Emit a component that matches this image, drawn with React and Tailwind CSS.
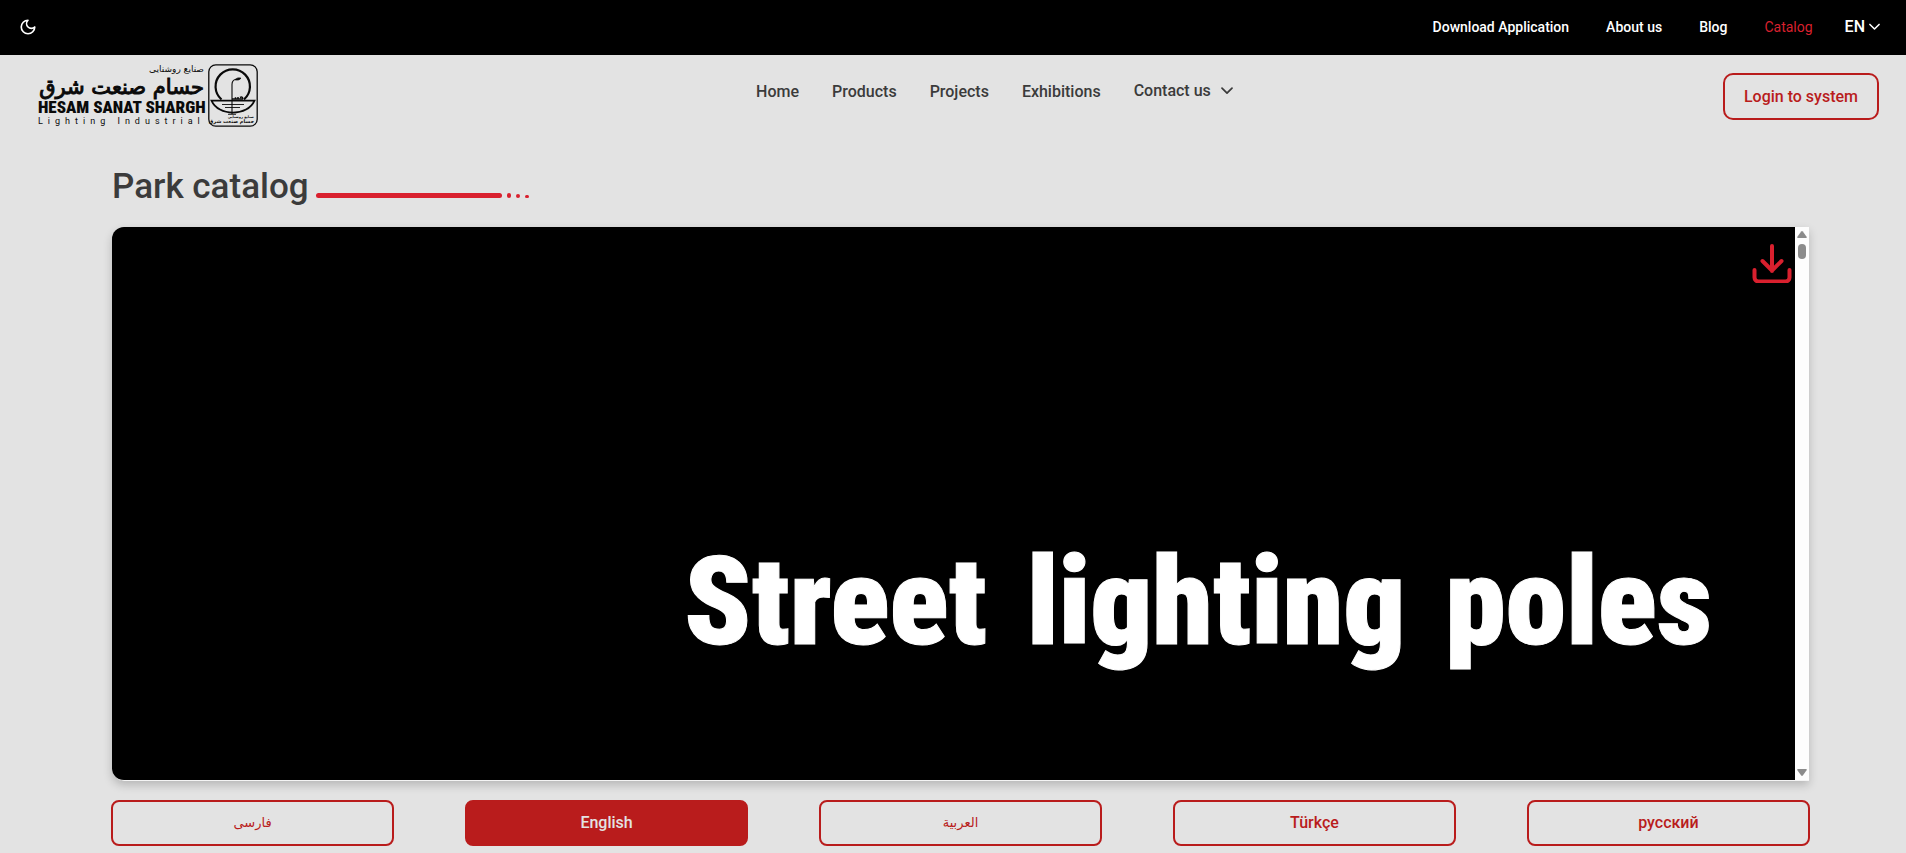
import React from "react";

const topLinks = ["Download Application", "About us", "Blog"];
const navLinks = ["Home", "Products", "Projects", "Exhibitions"];
const languages = [
  { label: "فارسی", code: "fa", dir: "rtl" },
  { label: "English", code: "en", dir: "ltr", active: true },
  { label: "العربية", code: "ar", dir: "rtl" },
  { label: "Türkçe", code: "tr", dir: "ltr" },
  { label: "русский", code: "ru", dir: "ltr" },
];

function Chevron({ className }) {
  return (
    <svg viewBox="0 0 12 8" className={className} fill="none" stroke="currentColor" strokeWidth="1.7" strokeLinecap="round" strokeLinejoin="round" aria-hidden="true">
      <path d="M1 1.2l5 5 5-5" />
    </svg>
  );
}

function Emblem() {
  return (
    <svg viewBox="0 0 50 63" className="h-[63px] w-[50px] shrink-0" fill="none" stroke="#0a0a0a" aria-hidden="true">
      <rect x="0.8" y="0.8" width="48.4" height="61.4" rx="7" strokeWidth="1.3" />
      <path d="M13.5 35.5A17.2 17.2 0 1 1 36 35.5" strokeWidth="2.2" />
      <path d="M3.5 36.6H46.5C43 44.5 34.5 48.6 25 48.6S7 44.5 3.500 36.6Z" strokeWidth="1.8" />
      <path d="M24 50V20.500C24 17.500 25.500 15.800 28 15.300" strokeWidth="1.1" />
      <path d="M27 15.800C28.500 13.900 31 13.500 33 14.200C31.500 16 29.500 16.300 27 15.800Z" fill="#0a0a0a" strokeWidth="0.8" />
      <path d="M24 35H34.500C35.200 33.500 34 32.300 32 33.500M30 34.500V33M27.500 34.500V33.200" strokeWidth="1.5" />
      <path d="M14 40.500H36M17 43.500H32M20 50.300H28" strokeWidth="0.9" />
      <g stroke="none" fill="#0a0a0a" className="font-['DejaVu_Sans',sans-serif] font-bold">
        <text x="46" y="53.500" fontSize="3.500" direction="rtl">صنایع روشنایی</text>
        <text x="46" y="59" fontSize="5" direction="rtl">حسام صنعت شرق</text>
      </g>
    </svg>
  );
}

function Logo() {
  return (
    <a href="#" aria-label="Hesam Sanat Shargh" className="flex items-center gap-1 text-[#0a0a0a]">
      <span className="flex w-[166px] flex-col whitespace-nowrap">
        <span dir="rtl" className="font-['DejaVu_Sans',sans-serif] text-[9px] leading-3">صنایع روشنایی</span>
        <span dir="rtl" className="font-['DejaVu_Sans',sans-serif] text-[21px] leading-[24px] [-webkit-text-stroke:1px_#0a0a0a]">حسام صنعت شرق</span>
        <span className="font-['Roboto_Condensed',sans-serif] text-[17px] font-black leading-4">HESAM SANAT SHARGH</span>
        <span className="text-[9px] leading-3 tracking-[5px]">Lighting Industrial</span>
      </span>
      <Emblem />
    </a>
  );
}

function TopBar() {
  return (
    <div className="flex h-[55px] items-center justify-between bg-black pb-[2px] pl-[19px] pr-[26px] text-white">
      <button type="button" aria-label="Dark mode">
        <svg viewBox="0 0 24 24" className="size-[18px]" fill="none" stroke="currentColor" strokeWidth="2.2" strokeLinecap="round" strokeLinejoin="round" aria-hidden="true">
          <path d="M12 3a6 6 0 0 0 9 9 9 9 0 1 1-9-9Z" />
        </svg>
      </button>
      <div className="flex items-center gap-8">
        <nav className="flex items-center gap-[37px] text-sm font-medium">
          {topLinks.map((label) => (
            <a key={label} href="#">{label}</a>
          ))}
          <a href="#" className="font-normal text-[#d9202e]">Catalog</a>
        </nav>
        <button type="button" className="flex items-center gap-1 font-medium">
          EN
          <Chevron className="h-2 w-[11px]" />
        </button>
      </div>
    </div>
  );
}

function Header() {
  return (
    <header className="flex items-start justify-between pl-[38px] pr-[27px] pt-2">
      <Logo />
      <nav className="flex items-center gap-[33px] pl-2 pt-4 font-medium">
        {navLinks.map((label) => (
          <a key={label} href="#">{label}</a>
        ))}
        <button type="button" className="flex items-center gap-[10px] pb-[2px]">
          Contact us
          <Chevron className="h-2 w-3" />
        </button>
      </nav>
      <a href="#" className="mt-[10px] rounded-[10px] border-2 border-[#b91c1c] px-[19px] py-[10px] font-medium leading-[23px] text-[#b91c1c]">
        Login to system
      </a>
    </header>
  );
}

function TitleRule() {
  return (
    <span className="flex items-end gap-[5px] pb-[13px]" aria-hidden="true">
      <span className="h-[5px] w-[186px] rounded-full bg-[#d9202e]" />
      <span className="h-[5px] w-1 rounded-full bg-[#d9202e]" />
      <span className="size-1 rounded-full bg-[#d9202e]" />
      <span className="h-[3px] w-1 rounded-full bg-[#d9202e]" />
    </span>
  );
}

function Viewer() {
  return (
    <section className="relative flex h-[554px] overflow-hidden rounded-l-xl border-b border-[#f4f4f4] bg-black shadow-[0_4px_10px_rgba(0,0,0,0.2)]">
      <div className="flex flex-1 items-end justify-end pb-[107px] pr-[83px]">
        <p className="flex gap-10 font-['Roboto_Condensed',sans-serif] text-[122px] font-black leading-[140px] text-white [-webkit-text-stroke:1px_white]">
          <span>Street</span> <span>lighting</span> <span>poles</span>
        </p>
      </div>
      <div className="flex w-[14px] flex-col items-center justify-between bg-[#fdfdfd] py-1" aria-hidden="true">
        <div className="flex flex-col items-center gap-[6px]">
          <svg viewBox="0 0 10 7" className="h-[7px] w-[10px]" fill="#8b8b8b"><path d="M4.200.5Q5-.3 5.800.5L9.800 6Q10 7 9 7H1Q0 7 .2 6Z" /></svg>
          <span className="h-[15px] w-2 rounded-full bg-[#8b8b8b]" />
        </div>
        <svg viewBox="0 0 10 7" className="h-[7px] w-[10px]" fill="#8b8b8b"><path d="M4.200 6.500Q5 7.300 5.800 6.500L9.800 1Q10 0 9 0H1Q0 0 .2 1Z" /></svg>
      </div>
      <a href="#" aria-label="Download catalog" className="absolute right-[17px] top-4 text-[#d9202e]">
        <svg viewBox="0 0 40 40" className="size-10" fill="none" stroke="currentColor" strokeWidth="4" strokeLinecap="round" strokeLinejoin="round" aria-hidden="true">
          <path d="M20 3V28M10.500 18L20 27.500l9.500-9.500M2.500 27v7.500a4 4 0 0 0 4 4H33.500a4 4 0 0 0 4-4v-7.500" />
        </svg>
      </a>
    </section>
  );
}

export default function App() {
  return (
    <div className="min-h-screen bg-[#e3e3e3] font-['Roboto',sans-serif] text-base text-[#3b3b3b]">
      <TopBar />
      <Header />
      <main className="pb-[7px] pl-[111px] pr-24 pt-8">
        <div className="mb-4 flex items-end gap-[7px] px-px">
          <h1 className="pt-1 text-[35px] font-medium leading-[48px]">Park catalog</h1>
          <TitleRule />
        </div>
        <div className="px-px">
          <Viewer />
        </div>
        <div className="mt-[19px] flex justify-between">
          {languages.map(({ label, code, dir, active }) => (
            <button
              key={code}
              type="button"
              lang={code}
              dir={dir}
              className={
                active
                  ? "h-[46px] w-1/6 rounded-lg border-2 border-[#b91c1c] bg-[#b91c1c] font-medium text-[#e3e3e3]"
                  : dir === "rtl"
                    ? "h-[46px] w-1/6 rounded-lg border-2 border-[#b91c1c] font-['DejaVu_Sans',sans-serif] text-[13px] text-[#b91c1c]"
                    : "h-[46px] w-1/6 rounded-lg border-2 border-[#b91c1c] font-medium text-[#b91c1c]"
              }
            >
              {label}
            </button>
          ))}
        </div>
      </main>
    </div>
  );
}
